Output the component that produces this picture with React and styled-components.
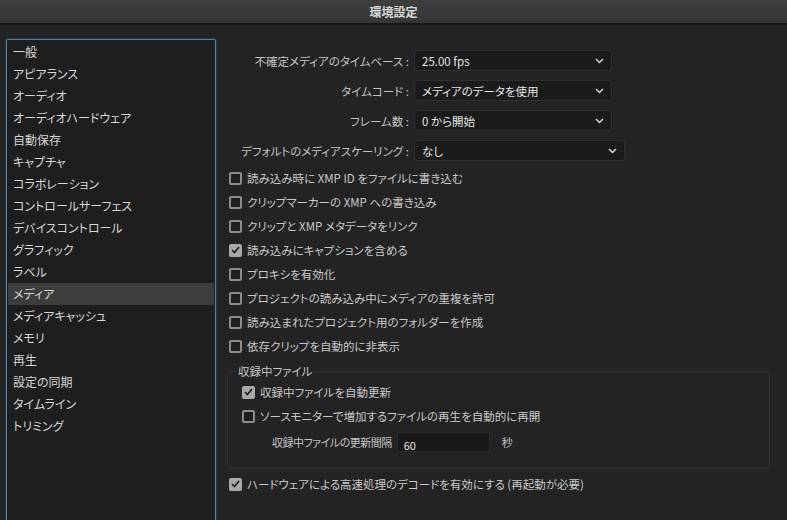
import React from "react";
import styled, { createGlobalStyle } from "styled-components";

const GlobalStyle = createGlobalStyle`
  html, body {
    margin: 0;
    padding: 0;
    background: #232323;
    overflow: hidden;
  }
  body {
    font-family: "Noto Sans CJK JP", "Open Sans", sans-serif;
    font-feature-settings: "palt";
    color: #cfcfcf;
  }
`;

const Window = styled.div`
  width: 787px;
  height: 520px;
  display: flex;
  flex-flow: column;
  background: #232323;
  overflow: hidden;
`;

const TitleBar = styled.div`
  height: 23px;
  flex-shrink: 0;
  display: flex;
  align-items: center;
  justify-content: center;
  background: linear-gradient(#3e3e3e, #353535);
  border-bottom: 2px solid #181818;
  font-size: 12px;
  font-weight: bold;
  color: #d8d8d8;
`;

const Body = styled.div`
  flex: 1;
  display: flex;
  padding: 14px 0 0 6px;
  min-height: 0;
`;

const Sidebar = styled.ul`
  list-style: none;
  margin: 0;
  padding: 1px 1px 0;
  width: 206px;
  height: 520px;
  flex-shrink: 0;
  background: #1e1e1e;
  border: 1px solid #5a7fa5;
  box-shadow: 0 0 0 1px #22364a;
  border-radius: 2px;
`;

const NavItem = styled.li`
  height: 22px;
  line-height: 22px;
  padding-left: 5px;
  font-size: 12px;
  color: #d6d6d6;
  background: ${p => (p.$active ? "#3d3d3d" : "transparent")};
`;

const Content = styled.div`
  flex: 1;
  padding: 11px 17px 0 13px;
  display: flex;
  flex-flow: column;
`;

const FieldGrid = styled.div`
  display: grid;
  grid-template-columns: 180px auto;
  column-gap: 5px;
  row-gap: 9px;
  margin-bottom: 5px;
`;

const Label = styled.label`
  align-self: center;
  text-align: right;
  font-size: 11.5px;
  color: #c4c4c4;
  white-space: nowrap;
`;

const Select = styled.div`
  width: ${p => p.$width}px;
  height: 21px;
  box-sizing: border-box;
  display: flex;
  align-items: center;
  justify-content: space-between;
  padding: 0 7px 0 7px;
  background: #1b1b1b;
  border: 1px solid #2f2f2f;
  border-radius: 3px;
  font-size: 11.5px;
  color: #e4e4e4;
`;

const CheckRow = styled.label`
  height: 24px;
  display: flex;
  align-items: center;
  gap: 5px;
  font-size: 11.5px;
  color: #c8c8c8;
  white-space: nowrap;
`;

const Box = styled.span`
  width: 13px;
  height: 13px;
  box-sizing: border-box;
  flex-shrink: 0;
  display: flex;
  align-items: center;
  justify-content: center;
  border: 2px solid #8c8c8c;
  border-radius: 2px;
  background: ${p => (p.$checked ? "#a8a8a8" : "#1e1e1e")};
  ${p => p.$checked && "border-color: #a8a8a8;"}
`;

const Group = styled.fieldset`
  margin: 5px 0 0 -2px;
  padding: 0 0 13px 14px;
  border: 1px solid #323232;
  border-radius: 3px;
`;

const Legend = styled.legend`
  padding: 0 2px;
  margin-left: -6px;
  margin-bottom: 1px;
  font-size: 11.5px;
  color: #c8c8c8;
`;

const IntervalRow = styled.div`
  display: flex;
  align-items: center;
  height: 26px;
  margin-top: 1px;
  padding-left: 30px;
  font-size: 11px;
  letter-spacing: -0.5px;
  color: #c4c4c4;
`;

const NumberInput = styled.div`
  width: 93px;
  height: 20px;
  box-sizing: border-box;
  margin: 0 12px 0 5px;
  padding: 4px 0 0 6px;
  background: #181818;
  border: 1px solid #2c2c2c;
  font-size: 11px;
  letter-spacing: 0;
  color: #e6e6e6;
`;

const FooterRow = styled(CheckRow)`
  margin-top: 3px;
`;

const Chevron = () => (
  <svg width="9" height="6" viewBox="0 0 9 6">
    <path d="M1 1l3.5 3.5L8 1" fill="none" stroke="#d4d4d4" strokeWidth="1.5" />
  </svg>
);

const Check = ({ checked }) => (
  <Box $checked={checked}>
    {checked && (
      <svg width="9" height="8" viewBox="0 0 9 8">
        <path d="M1 4l2.5 2.5L8 1" fill="none" stroke="#1c1c1c" strokeWidth="1.7" />
      </svg>
    )}
  </Box>
);

const navItems = [
  "一般",
  "アピアランス",
  "オーディオ",
  "オーディオハードウェア",
  "自動保存",
  "キャプチャ",
  "コラボレーション",
  "コントロールサーフェス",
  "デバイスコントロール",
  "グラフィック",
  "ラベル",
  "メディア",
  "メディアキャッシュ",
  "メモリ",
  "再生",
  "設定の同期",
  "タイムライン",
  "トリミング",
];

const fields = [
  { label: "不確定メディアのタイムベース :", value: "25.00 fps", width: 198 },
  { label: "タイムコード :", value: "メディアのデータを使用", width: 198 },
  { label: "フレーム数 :", value: "0 から開始", width: 198 },
  { label: "デフォルトのメディアスケーリング :", value: "なし", width: 211 },
];

const options = [
  { text: "読み込み時に XMP ID をファイルに書き込む", checked: false },
  { text: "クリップマーカーの XMP への書き込み", checked: false },
  { text: "クリップと XMP メタデータをリンク", checked: false },
  { text: "読み込みにキャプションを含める", checked: true },
  { text: "プロキシを有効化", checked: false },
  { text: "プロジェクトの読み込み中にメディアの重複を許可", checked: false },
  { text: "読み込まれたプロジェクト用のフォルダーを作成", checked: false },
  { text: "依存クリップを自動的に非表示", checked: false },
];

const App = () => {
  return (
    <Window>
      <GlobalStyle />
      <TitleBar>環境設定</TitleBar>
      <Body>
        <Sidebar>
          {navItems.map(item => (
            <NavItem key={item} $active={item === "メディア"}>
              {item}
            </NavItem>
          ))}
        </Sidebar>
        <Content>
          <FieldGrid>
            {fields.map(f => (
              <React.Fragment key={f.label}>
                <Label>{f.label}</Label>
                <Select $width={f.width}>
                  <span>{f.value}</span>
                  <Chevron />
                </Select>
              </React.Fragment>
            ))}
          </FieldGrid>
          {options.map(o => (
            <CheckRow key={o.text}>
              <Check checked={o.checked} />
              {o.text}
            </CheckRow>
          ))}
          <Group>
            <Legend>収録中ファイル</Legend>
            <CheckRow>
              <Check checked />
              収録中ファイルを自動更新
            </CheckRow>
            <CheckRow>
              <Check checked={false} />
              ソースモニターで増加するファイルの再生を自動的に再開
            </CheckRow>
            <IntervalRow>
              収録中ファイルの更新間隔
              <NumberInput>60</NumberInput>
              秒
            </IntervalRow>
          </Group>
          <FooterRow>
            <Check checked />
            ハードウェアによる高速処理のデコードを有効にする (再起動が必要)
          </FooterRow>
        </Content>
      </Body>
    </Window>
  );
};

export default App;
